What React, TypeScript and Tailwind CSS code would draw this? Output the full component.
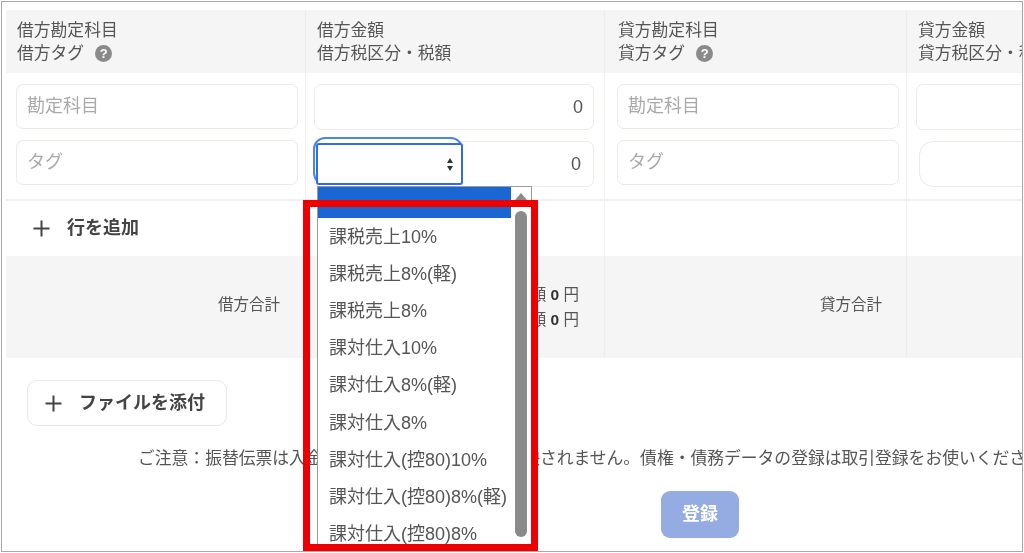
const options = [
  "課税売上10%",
  "課税売上8%(軽)",
  "課税売上8%",
  "課対仕入10%",
  "課対仕入8%(軽)",
  "課対仕入8%",
  "課対仕入(控80)10%",
  "課対仕入(控80)8%(軽)",
  "課対仕入(控80)8%",
]

function Help() {
  return (
    <span className="ml-[11px] inline-flex h-[17px] w-[17px] items-center justify-center rounded-full bg-[#8a8a8a] text-[13px] leading-none font-bold text-white">
      ?
    </span>
  )
}

function HeadCell({ top, bottom, help, pad }: { top: string; bottom: string; help?: boolean; pad: string }) {
  return (
    <div className={`flex h-[63px] flex-col justify-center whitespace-nowrap border-r border-[#eeecec] bg-[#f6f5f6] text-[16.8px] leading-[23px] text-[#555] ${pad}`}>
      <div>{top}</div>
      <div className="flex items-center">
        {bottom}
        {help && <Help />}
      </div>
    </div>
  )
}

function Field({ placeholder, value, className }: { placeholder?: string; value?: string; className: string }) {
  return (
    <input
      readOnly
      placeholder={placeholder}
      value={value ?? ""}
      className={`block rounded-[7px] border border-[#ecebe6] bg-white text-[18px] text-[#555] outline-none placeholder:text-[#a9a9a9] ${className}`}
    />
  )
}

function PlusIcon() {
  return (
    <svg width="17" height="17" viewBox="0 0 17 17" className="shrink-0">
      <path d="M0.5 8.5h16M8.5 0.5v16" stroke="#444" strokeWidth="2" />
    </svg>
  )
}

function Dropdown() {
  return (
    <div className="absolute left-[315px] top-[184px] h-[360px] w-[215px] overflow-hidden border border-[#9a9a9a] bg-white">
      <div className="flex h-full">
        <div className="w-[193px] shrink-0">
          <div className="mb-px h-[31px] bg-[#1a66d2]" />
          {options.map((o) => (
            <div key={o} className="flex h-[37.1px] items-center whitespace-nowrap pl-[11px] text-[18px] text-[#555]">
              {o}
            </div>
          ))}
        </div>
        <div className="flex flex-1 flex-col items-center pt-[6px]">
          <div className="h-0 w-0 border-x-[6px] border-b-[7px] border-x-transparent border-b-[#8a8a8a]" />
          <div className="mt-[11px] h-[326px] w-[12px] rounded-[6px] bg-[#8a8a8a]" />
        </div>
      </div>
    </div>
  )
}

export default function App() {
  return (
    <div className="h-[553px] w-[1024px] overflow-hidden bg-white p-px font-['Liberation_Sans','Noto_Sans_CJK_JP',sans-serif] blur-[0.5px]">
      <div className="relative h-[551px] w-[1022px] overflow-hidden border border-[#a8a8a8] pl-1 pt-2">
        <div className="grid w-[1100px] grid-cols-[300px_299px_302px_199px]">
          <HeadCell top="借方勘定科目" bottom="借方タグ" help pad="pl-[11px]" />
          <HeadCell top="借方金額" bottom="借方税区分・税額" pad="pl-[11px]" />
          <HeadCell top="貸方勘定科目" bottom="貸方タグ" help pad="pl-[13px]" />
          <HeadCell top="貸方金額" bottom="貸方税区分・税額" pad="pl-[11px]" />

          <div className="h-[126px] border-r border-[#f0efee] pl-[10px] pt-[11px]">
            <Field placeholder="勘定科目" className="h-[45px] w-[282px] pl-[10px]" />
            <Field placeholder="タグ" className="mt-[11px] h-[45px] w-[282px] pl-[10px]" />
          </div>
          <div className="relative h-[126px] border-r border-[#f0efee] pl-[8px] pt-[11px]">
            <Field value="0" className="h-[46px] w-[280px] pr-[10px] text-right" />
            <Field value="0" className="mt-[11px] h-[46px] w-[280px] pr-[12px] text-right" />
            <div className="absolute left-[7px] top-[64px] h-[48px] w-[150px] rounded-[12px] border-2 border-[#4d83ee] bg-white">
              <div className="absolute left-px bottom-[-2px] flex h-[42px] w-[147px] items-center justify-end rounded-[3px] border-2 border-[#2f6bea] bg-white pr-[8px]">
                <svg width="6" height="13" viewBox="0 0 6 13">
                  <path d="M3 0 6 5H0zM3 13 0 8h6z" fill="#333" />
                </svg>
              </div>
            </div>
          </div>
          <div className="h-[126px] border-r border-[#f0efee] pl-[12px] pt-[11px]">
            <Field placeholder="勘定科目" className="h-[45px] w-[282px] pl-[10px]" />
            <Field placeholder="タグ" className="mt-[11px] h-[45px] w-[282px] pl-[10px]" />
          </div>
          <div className="h-[126px] pl-[9px] pt-[11px]">
            <Field className="h-[46px] w-[180px]" />
            <Field className="ml-[3px] mt-[11px] h-[46px] w-[180px] rounded-[14px]" />
          </div>

          <div className="flex h-[57px] items-center gap-[17px] border-t-2 border-r border-[#f0efee] pl-[27px] text-[18px] font-bold text-[#444]">
            <PlusIcon />
            行を追加
          </div>
          <div className="h-[57px] border-t-2 border-r border-[#f0efee]" />
          <div className="h-[57px] border-t-2 border-r border-[#f0efee]" />
          <div className="h-[57px] border-t-2 border-[#f0efee]" />

          <div className="flex h-[102px] justify-end border-r border-[#eeecec] bg-[#f6f5f6] pr-[25px] pt-[38px] text-[15.5px] leading-[22px] text-[#555]">
            借方合計
          </div>
          <div className="flex h-[102px] flex-col items-end border-r border-[#eeecec] bg-[#f6f5f6] pr-[25px] pt-[26px] text-[15.5px] leading-[25px] text-[#555]">
            <div>
              税額 <b className="text-[#333]">0</b> 円
            </div>
            <div>
              金額 <b className="text-[#333]">0</b> 円
            </div>
          </div>
          <div className="flex h-[102px] justify-end border-r border-[#eeecec] bg-[#f6f5f6] pr-[24px] pt-[38px] text-[15.5px] leading-[22px] text-[#555]">
            貸方合計
          </div>
          <div className="h-[102px] bg-[#f6f5f6]" />
        </div>

        <div className="pl-[21px] pt-[22px]">
          <button className="flex h-[46px] w-[200px] items-center gap-[17px] rounded-[10px] border border-[#e9e8e8] bg-white pl-[17px] text-[18px] font-bold text-[#444]">
            <PlusIcon />
            ファイルを添付
          </button>
        </div>
        <p className="mt-[22px] whitespace-nowrap pl-[132px] text-[16.8px] leading-[22px] text-[#555]">
          ご注意：振替伝票は入金・出金のデータとしては反映されません。債権・債務データの登録は取引登録をお使いください。
        </p>
        <div className="pl-[655px] pt-[21px]">
          <button className="h-[47px] w-[78px] rounded-[9px] bg-[#95ace3] text-[18px] font-bold text-white">登録</button>
        </div>

        <Dropdown />
        <div className="pointer-events-none absolute left-[301px] top-[198px] h-[351px] w-[235px] border-[7px] border-[#ee0000]" />
      </div>
    </div>
  )
}
